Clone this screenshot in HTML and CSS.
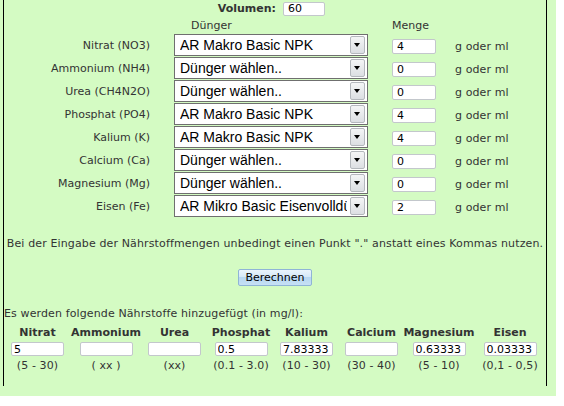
FILE: index.html
```html
<!DOCTYPE html>
<html lang="de">
<head>
  <meta charset="UTF-8">
  <title>Dünger Rechner</title>
  <link rel="stylesheet" href="styles.css">
</head>
<body>
  <div class="page">
    <div class="calc">
      <div class="volume-row">
        <span class="volume-label">Volumen:</span>
        <input type="text" class="volume-input" value="60">
      </div>

      <div class="dose-grid">
        <span></span>
        <span class="head head-duenger">Dünger</span>
        <span class="head">Menge</span>
        <span></span>

        <span class="nutrient">Nitrat (NO3)</span>
        <div class="select-wrap"><select><option>AR Makro Basic NPK</option></select><span class="arrow"></span></div>
        <input type="text" class="amount" value="4">
        <span class="unit">g oder ml</span>

        <span class="nutrient">Ammonium (NH4)</span>
        <div class="select-wrap"><select><option>Dünger wählen..</option></select><span class="arrow"></span></div>
        <input type="text" class="amount" value="0">
        <span class="unit">g oder ml</span>

        <span class="nutrient">Urea (CH4N2O)</span>
        <div class="select-wrap"><select><option>Dünger wählen..</option></select><span class="arrow"></span></div>
        <input type="text" class="amount" value="0">
        <span class="unit">g oder ml</span>

        <span class="nutrient">Phosphat (PO4)</span>
        <div class="select-wrap"><select><option>AR Makro Basic NPK</option></select><span class="arrow"></span></div>
        <input type="text" class="amount" value="4">
        <span class="unit">g oder ml</span>

        <span class="nutrient">Kalium (K)</span>
        <div class="select-wrap"><select><option>AR Makro Basic NPK</option></select><span class="arrow"></span></div>
        <input type="text" class="amount" value="4">
        <span class="unit">g oder ml</span>

        <span class="nutrient">Calcium (Ca)</span>
        <div class="select-wrap"><select><option>Dünger wählen..</option></select><span class="arrow"></span></div>
        <input type="text" class="amount" value="0">
        <span class="unit">g oder ml</span>

        <span class="nutrient">Magnesium (Mg)</span>
        <div class="select-wrap"><select><option>Dünger wählen..</option></select><span class="arrow"></span></div>
        <input type="text" class="amount" value="0">
        <span class="unit">g oder ml</span>

        <span class="nutrient">Eisen (Fe)</span>
        <div class="select-wrap"><select><option>AR Mikro Basic Eisenvolldünger</option></select><span class="arrow"></span></div>
        <input type="text" class="amount" value="2">
        <span class="unit">g oder ml</span>
      </div>

      <p class="hint">Bei der Eingabe der Nährstoffmengen unbedingt einen Punkt "." anstatt eines Kommas nutzen.</p>

      <div class="actions">
        <button type="button" class="calc-btn">Berechnen</button>
      </div>

      <p class="result-intro">Es werden folgende Nährstoffe hinzugefügt (in mg/l):</p>

      <div class="result-grid">
        <span class="col-head">Nitrat</span>
        <span class="col-head">Ammonium</span>
        <span class="col-head">Urea</span>
        <span class="col-head">Phosphat</span>
        <span class="col-head">Kalium</span>
        <span class="col-head">Calcium</span>
        <span class="col-head">Magnesium</span>
        <span class="col-head">Eisen</span>

        <input type="text" class="result" value="5">
        <input type="text" class="result" value="">
        <input type="text" class="result" value="">
        <input type="text" class="result" value="0.5">
        <input type="text" class="result" value="7.83333">
        <input type="text" class="result" value="">
        <input type="text" class="result" value="0.63333">
        <input type="text" class="result" value="0.03333">

        <span class="range">(5 - 30)</span>
        <span class="range">( xx )</span>
        <span class="range">(xx)</span>
        <span class="range">(0.1 - 3.0)</span>
        <span class="range">(10 - 30)</span>
        <span class="range">(30 - 40)</span>
        <span class="range">(5 - 10)</span>
        <span class="range">(0,1 - 0,5)</span>
      </div>
    </div>
  </div>
</body>
</html>
```

FILE: styles.css
```css
body {
  margin: 0;
  font-family: "DejaVu Sans", Verdana, sans-serif;
  font-size: 11px;
  color: #333;
  background: #fff;
}
.page {
  width: 553px;
  padding: 0 0 10px 3px;
  background-color: #d4fbc3;
}
.calc {
  width: 542px;
  height: 385px;
  padding-top: 1px;
  border-left: 1px solid #000;
  border-right: 1px solid #000;
}
.volume-row {
  display: flex;
  align-items: center;
  height: 15px;
}
.volume-label {
  width: 272px;
  text-align: right;
  font-weight: bold;
}
input[type="text"] {
  box-sizing: border-box;
  font-family: "DejaVu Sans", Verdana, sans-serif;
  font-size: 11px;
  color: #000;
  background: #fff;
  border: 1px solid #c3c7cc;
  border-radius: 2px;
  padding: 0 4px;
  margin: 0;
}
.volume-input {
  width: 42px;
  height: 14px;
  margin-left: 7px !important;
}
.dose-grid {
  display: grid;
  grid-template-columns: 146px 194px 44px auto;
  grid-template-rows: 17px;
  grid-auto-rows: 22px;
  column-gap: 24px;
  row-gap: 1px;
  align-items: center;
}
.head {
  align-self: end;
  line-height: 14px;
}
.head-duenger {
  padding-left: 17px;
}
.nutrient {
  text-align: right;
}
.select-wrap {
  position: relative;
  height: 22px;
}
.select-wrap select {
  appearance: none;
  -webkit-appearance: none;
  box-sizing: border-box;
  width: 194px;
  height: 22px;
  margin: 0;
  padding: 0 20px 0 5px;
  border: 1px solid #6f6f6f;
  border-radius: 0;
  background: #fff;
  font-family: "Liberation Sans", Arial, sans-serif;
  font-size: 14px;
  color: #000;
}
.arrow {
  position: absolute;
  top: 2px;
  right: 3px;
  width: 15px;
  height: 18px;
  box-sizing: border-box;
  border: 1px solid #b4b8bd;
  border-radius: 2px;
  background: linear-gradient(#f4f5f6, #dcdfe3);
}
.arrow::after {
  content: "";
  position: absolute;
  left: 3px;
  top: 6px;
  border-left: 3.5px solid transparent;
  border-right: 3.5px solid transparent;
  border-top: 4px solid #000;
}
.amount {
  width: 44px;
  height: 15px;
  align-self: end;
  margin-bottom: 2px !important;
}
.unit {
  margin-left: -5px;
  padding-top: 3px;
  letter-spacing: 0.1px;
}
.hint {
  margin: 20px 0 0;
  line-height: 13px;
  text-align: center;
  letter-spacing: 0.13px;
}
.actions {
  display: flex;
  justify-content: center;
  margin-top: 19px;
}
.calc-btn {
  font-family: "DejaVu Sans", Verdana, sans-serif;
  font-size: 11px;
  color: #000;
  width: 74px;
  height: 17px;
  padding: 0;
  border: 1px solid #8fb4d6;
  border-radius: 2px;
  background: linear-gradient(#eaf4fc 0%, #d6e9f8 45%, #b7d7f1 50%, #c6e0f5 100%);
}
.result-intro {
  margin: 21px 0 0;
  line-height: 13px;
  letter-spacing: 0.12px;
}
.result-grid {
  display: grid;
  grid-template-columns: 67px 70px 67px 66px 65px 65px 70px 72px;
  grid-template-rows: 17px 16px 16px;
  justify-items: center;
  align-items: center;
  margin-top: 4px;
}
.col-head {
  font-weight: bold;
}
.range {
  letter-spacing: 0.1px;
}
.result {
  width: 53px;
  height: 14px;
  padding: 0 2px !important;
}
```
